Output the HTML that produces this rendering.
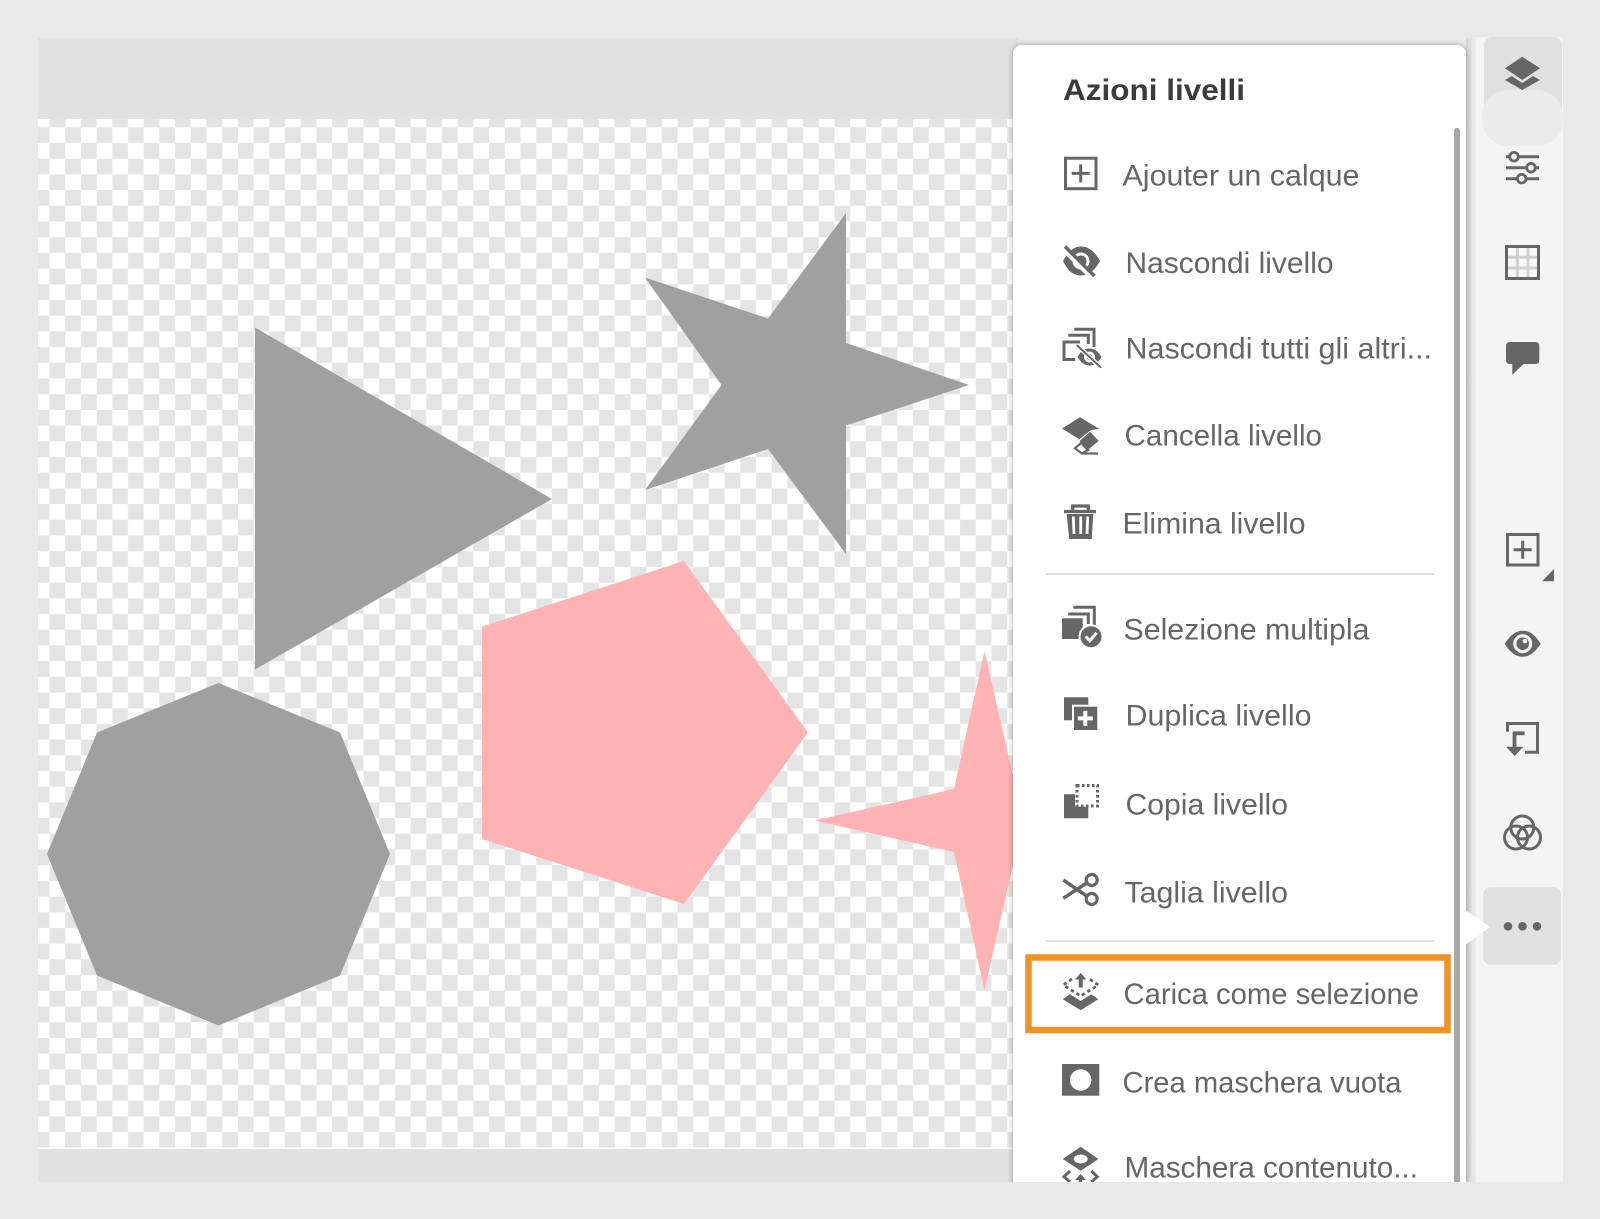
<!DOCTYPE html>
<html lang="it">
<head>
<meta charset="utf-8">
<title>Azioni livelli</title>
<style>
html,body{margin:0;padding:0;background:#e9e9e9;width:1600px;height:1219px;overflow:hidden}
svg{display:block}
text{font-family:"Liberation Sans",sans-serif;font-size:30px;fill:#666}
.t{font-weight:bold;fill:#3b3b3b}
.s{fill:none;stroke:#666}
.f{fill:#666}
</style>
</head>
<body>
<svg xmlns="http://www.w3.org/2000/svg" width="1600" height="1219" viewBox="0 0 1600 1219" stroke-width="3">
<defs>
<pattern id="ck" patternUnits="userSpaceOnUse" x="49.5" y="127.3" width="31.4" height="31.4">
<rect width="31.4" height="31.4" fill="#fff"/>
<rect x="15.7" width="15.7" height="15.7" fill="#e4e4e4"/>
<rect y="15.7" width="15.7" height="15.7" fill="#e4e4e4"/>
</pattern>
<linearGradient id="sh" x1="0" x2="1" y1="0" y2="0">
<stop offset="0" stop-color="#d6d6d6"/><stop offset="1" stop-color="#ececec"/>
</linearGradient>
</defs>

<rect width="1600" height="1219" fill="#e9e9e9"/>

<!-- canvas -->
<rect x="38" y="38" width="980" height="1144" fill="#e1e1e1"/>
<rect x="38" y="119" width="980" height="1030" fill="url(#ck)"/>
<rect x="38" y="1147.5" width="980" height="1.5" fill="#fff"/>

<!-- shapes -->
<polygon fill="#a0a0a0" points="255,327.5 552,499 255,669.5"/>
<polygon fill="#a0a0a0" points="846,213 846,343 969,385 846,425.500 846,554 768,449 645,490 721.500,385 645,277.500 768,318.500"/>
<polygon fill="#a0a0a0" points="218.500,683 340,732.500 390,854 340,975.500 218.500,1025.500 97,975.500 47,854 97,732.500"/>
<polygon fill="#ffb3b3" points="684,561 808,732.500 684,904 482,839 482,626.500"/>
<polygon fill="#ffb3b3" points="984.500,651 1016,789 1153,820.500 1016,852 984.500,990 954,852 815,820.500 954,789"/>

<!-- sidebar -->
<rect x="1476" y="37" width="87" height="1145" fill="#f4f4f4"/>
<rect x="1466" y="38" width="10" height="1144" fill="url(#sh)"/>
<rect x="1484" y="37" width="78" height="90" rx="8" fill="#e0e0e0"/>
<rect x="1482" y="90" width="81" height="56" rx="26" fill="#ebebeb"/>
<rect x="1483" y="887" width="78" height="78" rx="8" fill="#e1e1e1"/>

<!-- panel -->
<rect x="1013" y="45" width="453" height="1160" rx="9" fill="#fff" style="filter:drop-shadow(0 0 3px rgba(0,0,0,.32))"/>
<polygon points="1465,910 1490,927 1465,945" fill="#fff"/>
<rect x="1454" y="128" width="6" height="1060" rx="2.500" fill="#a8a8a8"/>

<!-- title and items -->
<text class="t" x="1063" y="100.200" textLength="182" lengthAdjust="spacingAndGlyphs">Azioni livelli</text>
<text x="1122.500" y="185.700" textLength="237" lengthAdjust="spacingAndGlyphs">Ajouter un calque</text>
<text x="1125.500" y="273.200" textLength="208" lengthAdjust="spacingAndGlyphs">Nascondi livello</text>
<text x="1125.500" y="358.500" textLength="306.500" lengthAdjust="spacingAndGlyphs">Nascondi tutti gli altri...</text>
<text x="1124.500" y="445.500" textLength="197.500" lengthAdjust="spacingAndGlyphs">Cancella livello</text>
<text x="1122.500" y="533.500" textLength="183" lengthAdjust="spacingAndGlyphs">Elimina livello</text>
<text x="1123.500" y="639.500" textLength="246" lengthAdjust="spacingAndGlyphs">Selezione multipla</text>
<text x="1125.500" y="725.700" textLength="186" lengthAdjust="spacingAndGlyphs">Duplica livello</text>
<text x="1125.500" y="814.300" textLength="162.500" lengthAdjust="spacingAndGlyphs">Copia livello</text>
<text x="1124.500" y="902.300" textLength="163.500" lengthAdjust="spacingAndGlyphs">Taglia livello</text>
<text x="1123.500" y="1004" textLength="295.500" lengthAdjust="spacingAndGlyphs">Carica come selezione</text>
<text x="1122.500" y="1092.700" textLength="279" lengthAdjust="spacingAndGlyphs">Crea maschera vuota</text>
<text x="1124.500" y="1177.500" textLength="293.500" lengthAdjust="spacingAndGlyphs">Maschera contenuto...</text>

<!-- dividers and highlight -->
<rect x="1046" y="573" width="388" height="2" fill="#e2e2e2"/>
<rect x="1046" y="940" width="388" height="2" fill="#e2e2e2"/>
<rect x="1028.500" y="957.500" width="419" height="72.500" fill="none" stroke="#ef9326" stroke-width="6.500"/>

<!-- menu icons -->
<!-- add -->
<rect x="1065.500" y="158.200" width="30.500" height="30.500" class="s"/>
<path d="M1071.700 173.400h18M1080.700 164.400v18" class="s"/>
<!-- hide -->
<path class="f" d="M1063 261C1069 250 1075 246.500 1081 246.500C1089 246.500 1095 252 1100 261C1095 270 1089 275.500 1081 275.500C1073 275.500 1068 271 1063 261Z"/>
<circle cx="1081" cy="261" r="8.500" fill="#fff"/>
<circle cx="1081" cy="261" r="5.500" fill="#666"/>
<path d="M1065 250L1092 277" stroke="#fff" stroke-width="6" fill="none"/>
<path d="M1065 246.500L1094.500 276" stroke="#666" stroke-width="3.500" fill="none"/>
<!-- hide all -->
<path class="s" d="M1074.300 329.300H1094V347M1068.300 335.300H1088.300V344M1080 342H1064V359.500H1075"/>
<path class="f" d="M1077.500 357C1081 350.500 1085 348.500 1089.500 348.500C1094 348.500 1098 351 1101.500 357C1098 363 1094 365.500 1089.500 365.500C1085 365.500 1081 363 1077.500 357Z"/>
<circle cx="1089.500" cy="357" r="5.500" fill="#fff"/>
<circle cx="1089.500" cy="357" r="3" fill="#666"/>
<path d="M1076.700 345L1101 367.700" stroke="#fff" stroke-width="4.500" fill="none"/>
<path d="M1076.700 345L1101 367.700" stroke="#666" stroke-width="2" fill="none"/>
<!-- clear -->
<polygon class="f" points="1080,417.300 1099.300,429 1091,430 1076.500,441.500 1079,439 1062,428.500"/>
<polygon class="f" points="1090,431.700 1098.700,440.700 1088.500,449.500 1079.500,441"/>
<path class="s" stroke-width="2.200" d="M1075 448.300L1081 443L1088 450L1082 453.500ZM1082 453.500H1098"/>
<!-- delete -->
<path class="s" stroke-width="3.200" d="M1064 511.500H1096M1072.700 510V506H1088.300V510"/>
<polygon class="f" points="1066.700,514 1093.300,514 1091.700,539 1069.300,539"/>
<path d="M1073.300 516.500L1074 534M1080.700 516.500V534M1087.700 516.500L1087 534" stroke="#fff" stroke-width="2.800" fill="none"/>
<!-- multi select -->
<path class="s" d="M1073.300 607.300H1094.300V626M1068.300 614H1088.300V624"/>
<rect x="1062" y="618.300" width="20.700" height="20.700" class="f"/>
<circle cx="1091" cy="636.700" r="11.500" fill="#666" stroke="#fff" stroke-width="2"/>
<path d="M1085.700 636.500L1089.800 640.800L1096.500 632.800" stroke="#fff" stroke-width="3" fill="none"/>
<!-- duplicate -->
<rect x="1064" y="697.300" width="24.300" height="23" class="f"/>
<rect x="1073" y="705.700" width="25.300" height="25.300" class="f" stroke="#fff" stroke-width="2"/>
<path d="M1077.800 718.400h15M1085.300 710.900v15" stroke="#fff" stroke-width="4" fill="none"/>
<!-- copy -->
<polygon class="f" points="1064,794.300 1075,794.300 1075,806.700 1088.300,806.700 1088.300,818.300 1064,818.300"/>
<rect x="1077" y="785.500" width="20.500" height="20.500" fill="none" stroke="#666" stroke-width="3" stroke-dasharray="2.500 2.500"/>
<!-- cut -->
<circle cx="1091.700" cy="880" r="5.500" class="s" stroke-width="3.200"/>
<circle cx="1091.700" cy="899" r="5.500" class="s" stroke-width="3.200"/>
<path class="s" stroke-width="3.500" d="M1063.300 880L1087.500 896.500M1063.300 898.300L1087.500 882.500"/>
<!-- load as selection -->
<polygon class="f" points="1080.700,973 1086.500,979.500 1082.700,979.500 1082.700,987.500 1078.700,987.500 1078.700,979.500 1075,979.500"/>
<path d="M1072 979L1063.300 985L1080.700 996L1098.300 985L1089.500 979" fill="none" stroke="#666" stroke-width="2.800" stroke-dasharray="3.500 3"/>
<polygon class="f" points="1062.700,999.300 1070,994.300 1080.700,1001 1091.300,994.300 1098.300,999.300 1080.700,1010.300"/>
<!-- blank mask -->
<rect x="1062" y="1064" width="37.300" height="31.700" class="f"/>
<circle cx="1080.700" cy="1080" r="10.700" fill="#fff"/>
<!-- content mask -->
<polygon class="f" points="1080.700,1146.700 1098.300,1159 1080.700,1170.700 1062.700,1159"/>
<ellipse cx="1080.700" cy="1159" rx="7" ry="4.500" fill="#fff"/>
<path class="s" d="M1070 1171L1064 1176.700L1070 1182M1091.300 1171L1097.300 1176.700L1091.300 1182"/>
<polygon class="f" points="1080.500,1174 1086,1180 1075,1180"/>
<rect x="1079" y="1179" width="3" height="4" class="f"/>

<!-- sidebar icons -->
<!-- layers -->
<polygon class="f" points="1522.300,56.700 1540,68.300 1522.300,80 1505,68.300"/>
<polygon class="f" points="1505,80 1511.700,76 1522.300,83 1533,76 1540,80 1522.300,90"/>
<!-- sliders -->
<path class="s" d="M1506 156.700H1539M1506 167.700H1539M1506 178.700H1539"/>
<circle cx="1514" cy="156.700" r="4.300" fill="#f4f4f4" stroke="#666" stroke-width="2.800"/>
<circle cx="1531" cy="167.700" r="4.300" fill="#f4f4f4" stroke="#666" stroke-width="2.800"/>
<circle cx="1521.700" cy="178.700" r="4.300" fill="#f4f4f4" stroke="#666" stroke-width="2.800"/>
<!-- grid -->
<rect x="1506.300" y="246.300" width="32.500" height="32.500" fill="#f8f8f8"/>
<path d="M1517.300 247V278M1528 247V278M1507 257.300H1538M1507 268H1538" stroke="#cfcfcf" stroke-width="3" fill="none"/>
<rect x="1506.500" y="246.500" width="32" height="32" class="s"/>
<!-- comment -->
<path class="f" d="M1510 342H1535.500Q1539.300 342 1539.300 346V360Q1539.300 364 1535.500 364H1523.500L1512.300 374.800V364H1510Q1506 364 1506 360V346Q1506 342 1510 342Z"/>
<!-- add -->
<rect x="1507.500" y="534.500" width="30.500" height="30.500" class="s"/>
<path class="s" d="M1513.700 549.800h18M1522.700 540.800v18"/>
<polygon class="f" points="1554,569 1554,581.300 1542,581.300"/>
<!-- eye -->
<path class="f" d="M1504.700 643.700C1512 633 1517 630.700 1522.700 630.700C1528 630.700 1534 633 1540.700 643.700C1534 654 1528 656.700 1522.700 656.700C1517 656.700 1511 654 1504.700 643.700Z"/>
<circle cx="1522.700" cy="643.700" r="9.500" fill="#f4f4f4"/>
<circle cx="1522.700" cy="643.700" r="6.300" fill="#666"/>
<circle cx="1525" cy="641" r="2.300" fill="#f4f4f4"/>
<!-- merge -->
<path class="s" stroke-width="3" d="M1507.500 731.700V723.500H1537.500V752.300H1525"/>
<path class="s" stroke-width="3.800" d="M1524.700 733.300H1514.500V747.500"/>
<polygon class="f" points="1506,746.700 1523.300,746.700 1514.700,756"/>
<!-- blend -->
<circle cx="1522.300" cy="827.500" r="11.500" class="s"/>
<circle cx="1516" cy="837.500" r="11.500" class="s"/>
<circle cx="1529" cy="837.500" r="11.500" class="s"/>
<!-- more -->
<circle cx="1508" cy="926.300" r="4.300" class="f"/>
<circle cx="1522.500" cy="926.300" r="4.300" class="f"/>
<circle cx="1537" cy="926.300" r="4.300" class="f"/>

<!-- bottom strip clip -->
<rect x="0" y="1182" width="1600" height="37" fill="#e9e9e9"/>
</svg>
</body>
</html>
